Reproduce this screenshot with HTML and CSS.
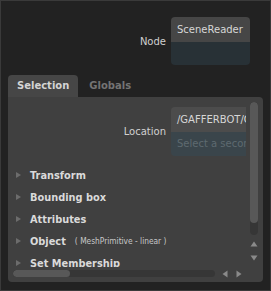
FILE: index.html
```html
<!doctype html>
<html>
	<head>
		<meta http-equiv="Content-Type" content="text/html; charset=utf-8" />
		<title>Scene Inspector</title>
		<link rel="stylesheet" href="styles.css">
	</head>
	<body>
		<div class="frame">
			<div class="plug_row node_row">
				<div class="plug_label">Node</div>
				<div class="plug_widget">
					<div class="plug_top">SceneReader</div>
					<div class="plug_bottom node_bottom"></div>
				</div>
			</div>
			<div class="tabs">
				<div class="tab tab_current">Selection</div>
				<div class="tab">Globals</div>
			</div>
			<div class="panel">
				<div class="viewport">
					<div class="plug_row location_row">
						<div class="plug_label">Location</div>
						<div class="plug_widget location_widget">
							<div class="plug_top location_top">/GAFFERBOT/C_TORSO_GRP</div>
							<div class="plug_bottom location_bottom">Select a second location</div>
						</div>
					</div>
					<div class="section"><span class="arrow"></span><span class="section_name">Transform</span></div>
					<div class="section"><span class="arrow"></span><span class="section_name">Bounding box</span></div>
					<div class="section"><span class="arrow"></span><span class="section_name">Attributes</span></div>
					<div class="section"><span class="arrow"></span><span class="section_name">Object</span><span class="section_info">( MeshPrimitive - linear )</span></div>
					<div class="section"><span class="arrow"></span><span class="section_name">Set Membership</span></div>
				</div>
				<div class="vscroll">
					<div class="vtrack"><div class="vhandle"></div></div>
					<svg class="vbutton" width="8" height="6" viewBox="0 0 8 6"><polygon points="4,0.5 7.5,5.5 0.5,5.5" fill="#8a8a8a"/></svg>
					<svg class="vbutton" width="8" height="6" viewBox="0 0 8 6"><polygon points="0.5,0.5 7.5,0.5 4,5.5" fill="#8a8a8a"/></svg>
				</div>
				<div class="hscroll">
					<div class="htrack"><div class="hhandle"></div></div>
					<svg class="hbutton" width="6" height="8" viewBox="0 0 6 8"><polygon points="5.5,0.5 5.5,7.5 0.5,4" fill="#8a8a8a"/></svg>
					<svg class="hbutton" width="6" height="8" viewBox="0 0 6 8"><polygon points="0.5,0.5 0.5,7.5 5.5,4" fill="#8a8a8a"/></svg>
				</div>
			</div>
		</div>
	</body>
</html>
```
FILE: styles.css
```css
body {
	margin : 0;
	background-color : #222222;
	font-family : "DejaVu Sans", sans-serif;
	font-size : 10px;
	color : #d2d2d2;
}
.frame {
	width : 271px;
	height : 291px;
	box-sizing : border-box;
	border : 1px solid #3a3a3a;
	background-color : #222222;
	padding : 16px 7px 8px 7px;
	display : flex;
	flex-direction : column;
}
.plug_row {
	display : flex;
	align-items : center;
	gap : 5px;
}
.plug_label {
	width : 158px;
	flex : none;
	text-align : right;
	color : #d0d0d0;
}
.plug_widget {
	width : 79px;
	flex : none;
	border-radius : 4px;
	overflow : hidden;
}
.plug_top {
	height : 25px;
	line-height : 25px;
	padding-left : 6px;
	background-color : #464646;
	white-space : nowrap;
	overflow : hidden;
	color : #d6d6d6;
}
.plug_bottom {
	height : 23px;
	line-height : 23px;
	padding-left : 6px;
	white-space : nowrap;
	overflow : hidden;
}
.node_bottom {
	background-color : #283136;
}
.location_top {
	background-color : #4c4c4c;
}
.location_bottom {
	height : 24px;
	line-height : 24px;
	background-color : #3a454b;
	color : #5e6a70;
}
.tabs {
	display : flex;
	gap : 2px;
	margin-top : 10px;
	height : 22px;
}
.tab {
	padding : 0 9px;
	line-height : 22px;
	font-weight : bold;
	color : #747474;
	border-radius : 4px 4px 0 0;
}
.tab_current {
	background-color : #464646;
	color : #d4d4d4;
}
.panel {
	flex : 1;
	background-color : #404040;
	border-radius : 0 4px 4px 4px;
	display : grid;
	grid-template-columns : 1fr 8px;
	grid-template-rows : 1fr 7px;
	column-gap : 4px;
	row-gap : 3px;
	padding : 0 5px 5px 0;
	min-height : 0;
}
.viewport {
	overflow : hidden;
	padding-top : 10px;
	min-height : 0;
}
.location_row {
	margin-bottom : 8px;
}
.section {
	display : flex;
	align-items : center;
	height : 22px;
	padding-left : 8px;
	white-space : nowrap;
}
.arrow {
	width : 0;
	height : 0;
	border-top : 3px solid transparent;
	border-bottom : 3px solid transparent;
	border-left : 5px solid #6c6c6c;
	margin-right : 9px;
}
.section_name {
	font-weight : bold;
	font-size : 9.8px;
	color : #dadada;
}
.section_info {
	font-family : "DejaVu Sans Condensed", "DejaVu Sans", sans-serif;
	font-stretch : condensed;
	font-size : 8.3px;
	color : #c8c8c8;
	margin-left : 9px;
}
.vscroll {
	margin-top : 5px;
	display : flex;
	flex-direction : column;
	align-items : center;
}
.vtrack {
	width : 8px;
	height : 133px;
	background-color : #363636;
	border-radius : 4px;
	overflow : hidden;
}
.vhandle {
	height : 121px;
	background-color : #585858;
	border-radius : 4px;
}
.vbutton {
	margin-top : 6px;
	display : block;
}
.vbutton + .vbutton {
	margin-top : 8px;
}
.hscroll {
	grid-column : 1 / 3;
	display : flex;
	align-items : center;
	padding-left : 5px;
}
.htrack {
	width : 202px;
	height : 7px;
	background-color : #363636;
	border-radius : 4px;
	overflow : hidden;
}
.hhandle {
	width : 57px;
	height : 7px;
	background-color : #585858;
	border-radius : 4px;
}
.hbutton {
	display : block;
	margin-left : 7px;
}
.hbutton + .hbutton {
	margin-left : 8px;
}
```
